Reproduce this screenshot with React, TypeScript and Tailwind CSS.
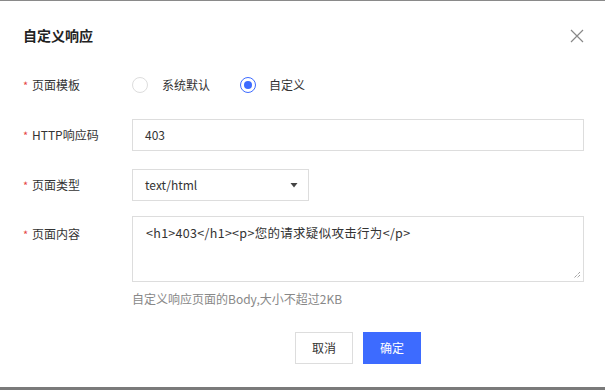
import React from "react";

const font = { fontFamily: '"Microsoft YaHei", "Noto Sans CJK SC", "Liberation Sans", sans-serif' };

function Label({ children }: { children: React.ReactNode }) {
  return (
    <div className="w-[109px] flex items-center text-[12px] text-[#333]">
      <span className="text-[#e54545] w-[9px] text-[11px] leading-none">*</span>
      <span>{children}</span>
    </div>
  );
}

export default function App() {
  return (
    <div className="w-[605px] h-[390px] bg-white flex flex-col border-t border-[#8a8a8a] overflow-hidden" style={font}>
      <div className="flex items-center justify-between pl-[23px] pr-[21px] h-[69px]">
        <div className="text-[14px] font-bold text-[#222]">自定义响应</div>
        <svg width="14" height="14" viewBox="0 0 14 14" className="text-[#888]">
          <path d="M1 1 L13 13 M13 1 L1 13" stroke="currentColor" strokeWidth="1.2" fill="none" />
        </svg>
      </div>
      <div className="flex flex-col pl-[23px] pr-[21px]">
        <div className="flex items-center h-[30px]">
          <Label>页面模板</Label>
          <div className="flex items-center text-[12px] text-[#333]">
            <span className="w-[16px] h-[16px] rounded-full border border-[#ddd] bg-white mr-[14px]"></span>
            <span className="mr-[30px]">系统默认</span>
            <span className="w-[16px] h-[16px] rounded-full border-[1.5px] border-[#3d6bff] flex items-center justify-center mr-[13px]">
              <span className="w-[8px] h-[8px] rounded-full bg-[#3d6bff]"></span>
            </span>
            <span>自定义</span>
          </div>
        </div>
        <div className="flex items-center mt-[19px]">
          <Label>HTTP响应码</Label>
          <div className="flex-1 h-[32px] border border-[#ddd] flex items-center pl-[12px] text-[12px] text-[#333]">403</div>
        </div>
        <div className="flex items-center mt-[18px]">
          <Label>页面类型</Label>
          <div className="w-[177px] h-[32px] border border-[#ddd] flex items-center justify-between pl-[12px] pr-[10px] text-[12px] text-[#333]">
            <span>text/html</span>
            <svg width="8" height="5" viewBox="0 0 8 5">
              <path d="M0.5 0 L7.5 0 L4 4.5 Z" fill="#444" />
            </svg>
          </div>
        </div>
        <div className="flex items-start mt-[15px]">
          <div className="pt-[9px]"><Label>页面内容</Label></div>
          <div className="flex-1 flex flex-col">
            <div className="relative h-[66px] border border-[#ddd] pl-[13px] pt-[7px] text-[12.5px] text-[#333] tracking-[0.3px]">
              &lt;h1&gt;403&lt;/h1&gt;&lt;p&gt;您的请求疑似攻击行为&lt;/p&gt;
              <svg width="8" height="8" viewBox="0 0 8 8" className="absolute right-[2px] bottom-[2px]">
                <path d="M7 1 L1 7 M7 4 L4 7" stroke="#777" strokeWidth="1" strokeDasharray="1 1" fill="none" />
              </svg>
            </div>
            <div className="mt-[8px] text-[12px] text-[#888]">自定义响应页面的Body,大小不超过2KB</div>
          </div>
        </div>
        <div className="flex justify-center gap-[10px] mt-[24px] pl-[109px]">
          <button className="w-[58px] h-[32px] border border-[#ddd] bg-white text-[12px] text-[#333]">取消</button>
          <button className="w-[58px] h-[32px] bg-[#3d6bff] text-white text-[12px]">确定</button>
        </div>
      </div>
      <div className="mt-auto h-[3px] bg-[#7a7a7a]"></div>
    </div>
  );
}
